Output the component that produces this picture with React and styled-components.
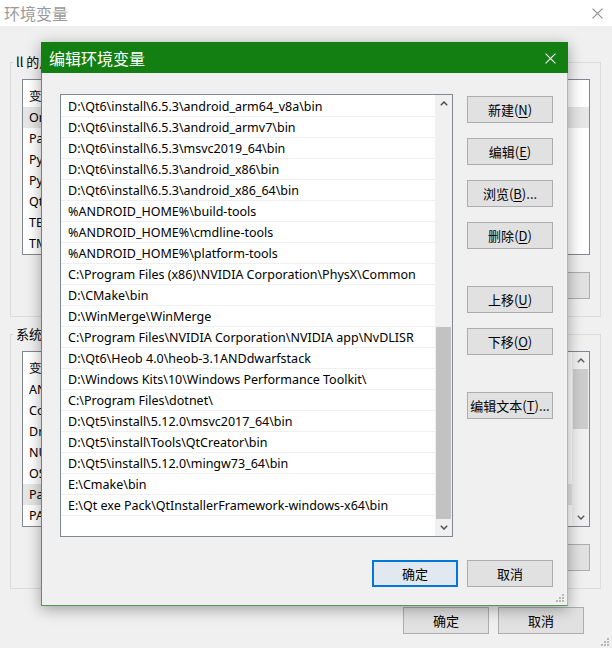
import React from "react";
import styled, { createGlobalStyle } from "styled-components";

const GlobalStyle = createGlobalStyle`
  html, body {
    margin: 0;
    padding: 0;
    background: #f0f0f0;
  }
  body {
    font-family: "Noto Sans", "Noto Sans CJK SC", sans-serif;
    font-size: 13px;
    color: #000;
  }
  * {
    box-sizing: border-box;
  }
`;

const Window = styled.div`
  position: relative;
  width: 612px;
  height: 648px;
  background: #f0f0f0;
  overflow: hidden;
`;

const TitleBar = styled.div`
  height: 26px;
  background: #fff;
  display: flex;
  align-items: center;
  justify-content: space-between;
  padding: 0 9px 0 4px;
`;

const Title = styled.span`
  font-family: "Noto Sans CJK SC", sans-serif;
  font-size: 16px;
  line-height: 20px;
  color: ${(p) => (p.$active ? "#fff" : "#9a9a9a")};
`;

const Body = styled.div`
  padding: 27px 11px 0 10px;
  display: flex;
  flex-direction: column;
`;

const Group = styled.fieldset`
  margin: 0 0 8px;
  border: 1px solid #dcdcdc;
  padding: 8px 10px 17px 11px;
  min-width: 0;
`;

const Legend = styled.legend`
  margin-left: -8px;
  padding: 0 2px;
  font-family: "Noto Sans CJK SC", sans-serif;
  font-size: 13px;
  line-height: 18px;
`;

const BgList = styled.div`
  height: 176px;
  border: 1px solid #828790;
  background: #fff;
  display: grid;
  grid-template-columns: 1fr ${(p) => (p.$scroll ? "17px" : "0px")};
`;

const BgRows = styled.div`
  padding-top: 6px;
  overflow: hidden;
`;

const BgRow = styled.div`
  height: 21px;
  line-height: 21px;
  padding-left: 6px;
  white-space: nowrap;
  font-size: 12.5px;
  background: ${(p) => (p.$sel ? "#e6e6e6" : "transparent")};
  font-family: "Noto Sans", "Noto Sans CJK SC", sans-serif;
`;

const ButtonRow = styled.div`
  display: flex;
  justify-content: flex-end;
  gap: 9px;
  margin-top: ${(p) => p.$top || 17}px;
  margin-right: ${(p) => p.$right || 0}px;
`;

const Button = styled.button`
  width: 86px;
  height: 27px;
  padding: 0;
  background: ${(p) => (p.$primary ? "#e1e8ef" : "#e1e1e1")};
  border: ${(p) => (p.$primary ? "2px solid #0078d7" : "1px solid #adadad")};
  font-family: "Noto Sans CJK SC", sans-serif;
  font-size: 13px;
  color: #000;
  margin-top: ${(p) => p.$sep || 0}px;
  u {
    text-underline-offset: 2px;
  }
`;

const ScrollBar = styled.div`
  display: flex;
  flex-direction: column;
  background: #f0f0f0;
`;

const ArrowBox = styled.div`
  height: 17px;
  display: flex;
  align-items: center;
  justify-content: center;
`;

const Track = styled.div`
  flex: 1;
  display: flex;
  flex-direction: column;
  justify-content: ${(p) => (p.$end ? "flex-end" : "flex-start")};
  padding: 0 1px;
`;

const Thumb = styled.div`
  height: ${(p) => p.$h}px;
  background: ${(p) => p.$color || "#c2c2c2"};
`;

const Dialog = styled.div`
  position: absolute;
  left: 41px;
  top: 42px;
  width: 527px;
  height: 564px;
  background: #f0f0f0;
  border: 1px solid #4e9a4e;
  border-right-color: #8fd08f;
  box-shadow: 0 3px 14px rgba(0, 0, 0, 0.35);
  display: flex;
  flex-direction: column;
`;

const DialogTitleBar = styled.div`
  height: 31px;
  margin: -1px -1px 0;
  padding: 1px 12px 0 8px;
  background: #137f13;
  display: flex;
  align-items: center;
  justify-content: space-between;
`;

const DialogBody = styled.div`
  padding: 21px 14px 17px 18px;
  display: flex;
  flex-direction: column;
`;

const MainRow = styled.div`
  display: flex;
  gap: 14px;
`;

const PathList = styled.div`
  width: 393px;
  height: 443px;
  border: 1px solid #828790;
  background: #fff;
  display: grid;
  grid-template-columns: 1fr 17px;
`;

const PathRows = styled.div`
  padding: 1px 0 0;
  overflow: hidden;
`;

const PathRow = styled.div`
  height: 21px;
  line-height: 21px;
  padding-left: 7px;
  border-bottom: 1px solid #efefef;
  white-space: nowrap;
  font-size: 12.5px;
`;

const SideButtons = styled.div`
  display: flex;
  flex-direction: column;
  gap: 15px;
  margin-top: 2px;
`;

const Grip = styled.svg`
  position: absolute;
  right: ${(p) => p.$r}px;
  bottom: ${(p) => p.$b}px;
`;

const Chevron = ({ down, color = "#505050" }) => (
  <svg width="8" height="5" viewBox="0 0 8 5">
    <polyline
      points={down ? "0.8,0.8 4,4 7.2,0.8" : "0.8,4.2 4,1 7.2,4.2"}
      fill="none"
      stroke={color}
      strokeWidth="1.5"
    />
  </svg>
);

const CloseX = ({ color, size }) => (
  <svg width={size} height={size} viewBox="0 0 10 10">
    <path d="M0.5 0.5 L9.5 9.5 M9.5 0.5 L0.5 9.5" stroke={color} strokeWidth="1" fill="none" />
  </svg>
);

const GripDots = ({ r, b }) => (
  <Grip $r={r} $b={b} width="10" height="10" viewBox="0 0 10 10">
    {[
      [8, 2],
      [5, 5],
      [8, 5],
      [2, 8],
      [5, 8],
      [8, 8],
    ].map(([x, y]) => (
      <rect key={x + "-" + y} x={x - 1} y={y - 1} width="2" height="2" fill="#b8b8b8" />
    ))}
  </Grip>
);

const Mn = ({ label, k, tail = "" }) => (
  <>
    {label}(<u>{k}</u>){tail}
  </>
);

const userVars = ["OneDrive", "Path", "PyCharm", "PyCharm Community Edition", "QtMsBuild", "TEMP", "TMP"];
const sysVars = ["ANDROID_HOME", "ComSpec", "DriverData", "NUMBER_OF_PROCESSORS", "OS", "Path", "PATHEXT"];

const paths = [
  "D:\\Qt6\\install\\6.5.3\\android_arm64_v8a\\bin",
  "D:\\Qt6\\install\\6.5.3\\android_armv7\\bin",
  "D:\\Qt6\\install\\6.5.3\\msvc2019_64\\bin",
  "D:\\Qt6\\install\\6.5.3\\android_x86\\bin",
  "D:\\Qt6\\install\\6.5.3\\android_x86_64\\bin",
  "%ANDROID_HOME%\\build-tools",
  "%ANDROID_HOME%\\cmdline-tools",
  "%ANDROID_HOME%\\platform-tools",
  "C:\\Program Files (x86)\\NVIDIA Corporation\\PhysX\\Common",
  "D:\\CMake\\bin",
  "D:\\WinMerge\\WinMerge",
  "C:\\Program Files\\NVIDIA Corporation\\NVIDIA app\\NvDLISR",
  "D:\\Qt6\\Heob 4.0\\heob-3.1ANDdwarfstack",
  "D:\\Windows Kits\\10\\Windows Performance Toolkit\\",
  "C:\\Program Files\\dotnet\\",
  "D:\\Qt5\\install\\5.12.0\\msvc2017_64\\bin",
  "D:\\Qt5\\install\\Tools\\QtCreator\\bin",
  "D:\\Qt5\\install\\5.12.0\\mingw73_64\\bin",
  "E:\\Cmake\\bin",
  "E:\\Qt exe Pack\\QtInstallerFramework-windows-x64\\bin",
];

function VarGroup({ title, vars, selected, scroll }) {
  return (
    <Group>
      <Legend>{title}</Legend>
      <BgList $scroll={scroll}>
        <BgRows>
          <BgRow>变量</BgRow>
          {vars.map((v) => (
            <BgRow key={v} $sel={v === selected}>
              {v}
            </BgRow>
          ))}
        </BgRows>
        {scroll && (
          <ScrollBar>
            <ArrowBox>
              <Chevron color="#606060" />
            </ArrowBox>
            <Track>
              <Thumb $h={60} $color="#cdcdcd" />
            </Track>
            <ArrowBox>
              <Chevron down color="#606060" />
            </ArrowBox>
          </ScrollBar>
        )}
      </BgList>
      <ButtonRow>
        <Button>
          <Mn label="新建" k="N" />
        </Button>
        <Button>
          <Mn label="编辑" k="I" />
        </Button>
        <Button>
          <Mn label="删除" k="L" />
        </Button>
      </ButtonRow>
    </Group>
  );
}

export default function App() {
  return (
    <>
      <GlobalStyle />
      <Window>
        <TitleBar>
          <Title>环境变量</Title>
          <CloseX color="#8a8a8a" size={11} />
        </TitleBar>
        <Body>
          <VarGroup title="ll 的用户变量(U)" vars={userVars} selected="OneDrive" />
          <VarGroup title="系统变量(S)" vars={sysVars} selected="Path" scroll />
          <ButtonRow $top={10} $right={17}>
            <Button>确定</Button>
            <Button>取消</Button>
          </ButtonRow>
        </Body>
        <GripDots r={2} b={1} />

        <Dialog>
          <DialogTitleBar>
            <Title $active>编辑环境变量</Title>
            <CloseX color="#ffffff" size={11} />
          </DialogTitleBar>
          <DialogBody>
            <MainRow>
              <PathList>
                <PathRows>
                  {paths.map((p) => (
                    <PathRow key={p}>{p}</PathRow>
                  ))}
                </PathRows>
                <ScrollBar>
                  <ArrowBox>
                    <Chevron />
                  </ArrowBox>
                  <Track $end>
                    <Thumb $h={192} />
                  </Track>
                  <ArrowBox>
                    <Chevron down />
                  </ArrowBox>
                </ScrollBar>
              </PathList>
              <SideButtons>
                <Button>
                  <Mn label="新建" k="N" />
                </Button>
                <Button>
                  <Mn label="编辑" k="E" />
                </Button>
                <Button>
                  <Mn label="浏览" k="B" tail="..." />
                </Button>
                <Button>
                  <Mn label="删除" k="D" />
                </Button>
                <Button $sep={22}>
                  <Mn label="上移" k="U" />
                </Button>
                <Button>
                  <Mn label="下移" k="O" />
                </Button>
                <Button $sep={22}>
                  <Mn label="编辑文本" k="T" tail="..." />
                </Button>
              </SideButtons>
            </MainRow>
            <ButtonRow $top={23}>
              <Button $primary>确定</Button>
              <Button>取消</Button>
            </ButtonRow>
          </DialogBody>
          <GripDots r={2} b={2} />
        </Dialog>
      </Window>
    </>
  );
}
